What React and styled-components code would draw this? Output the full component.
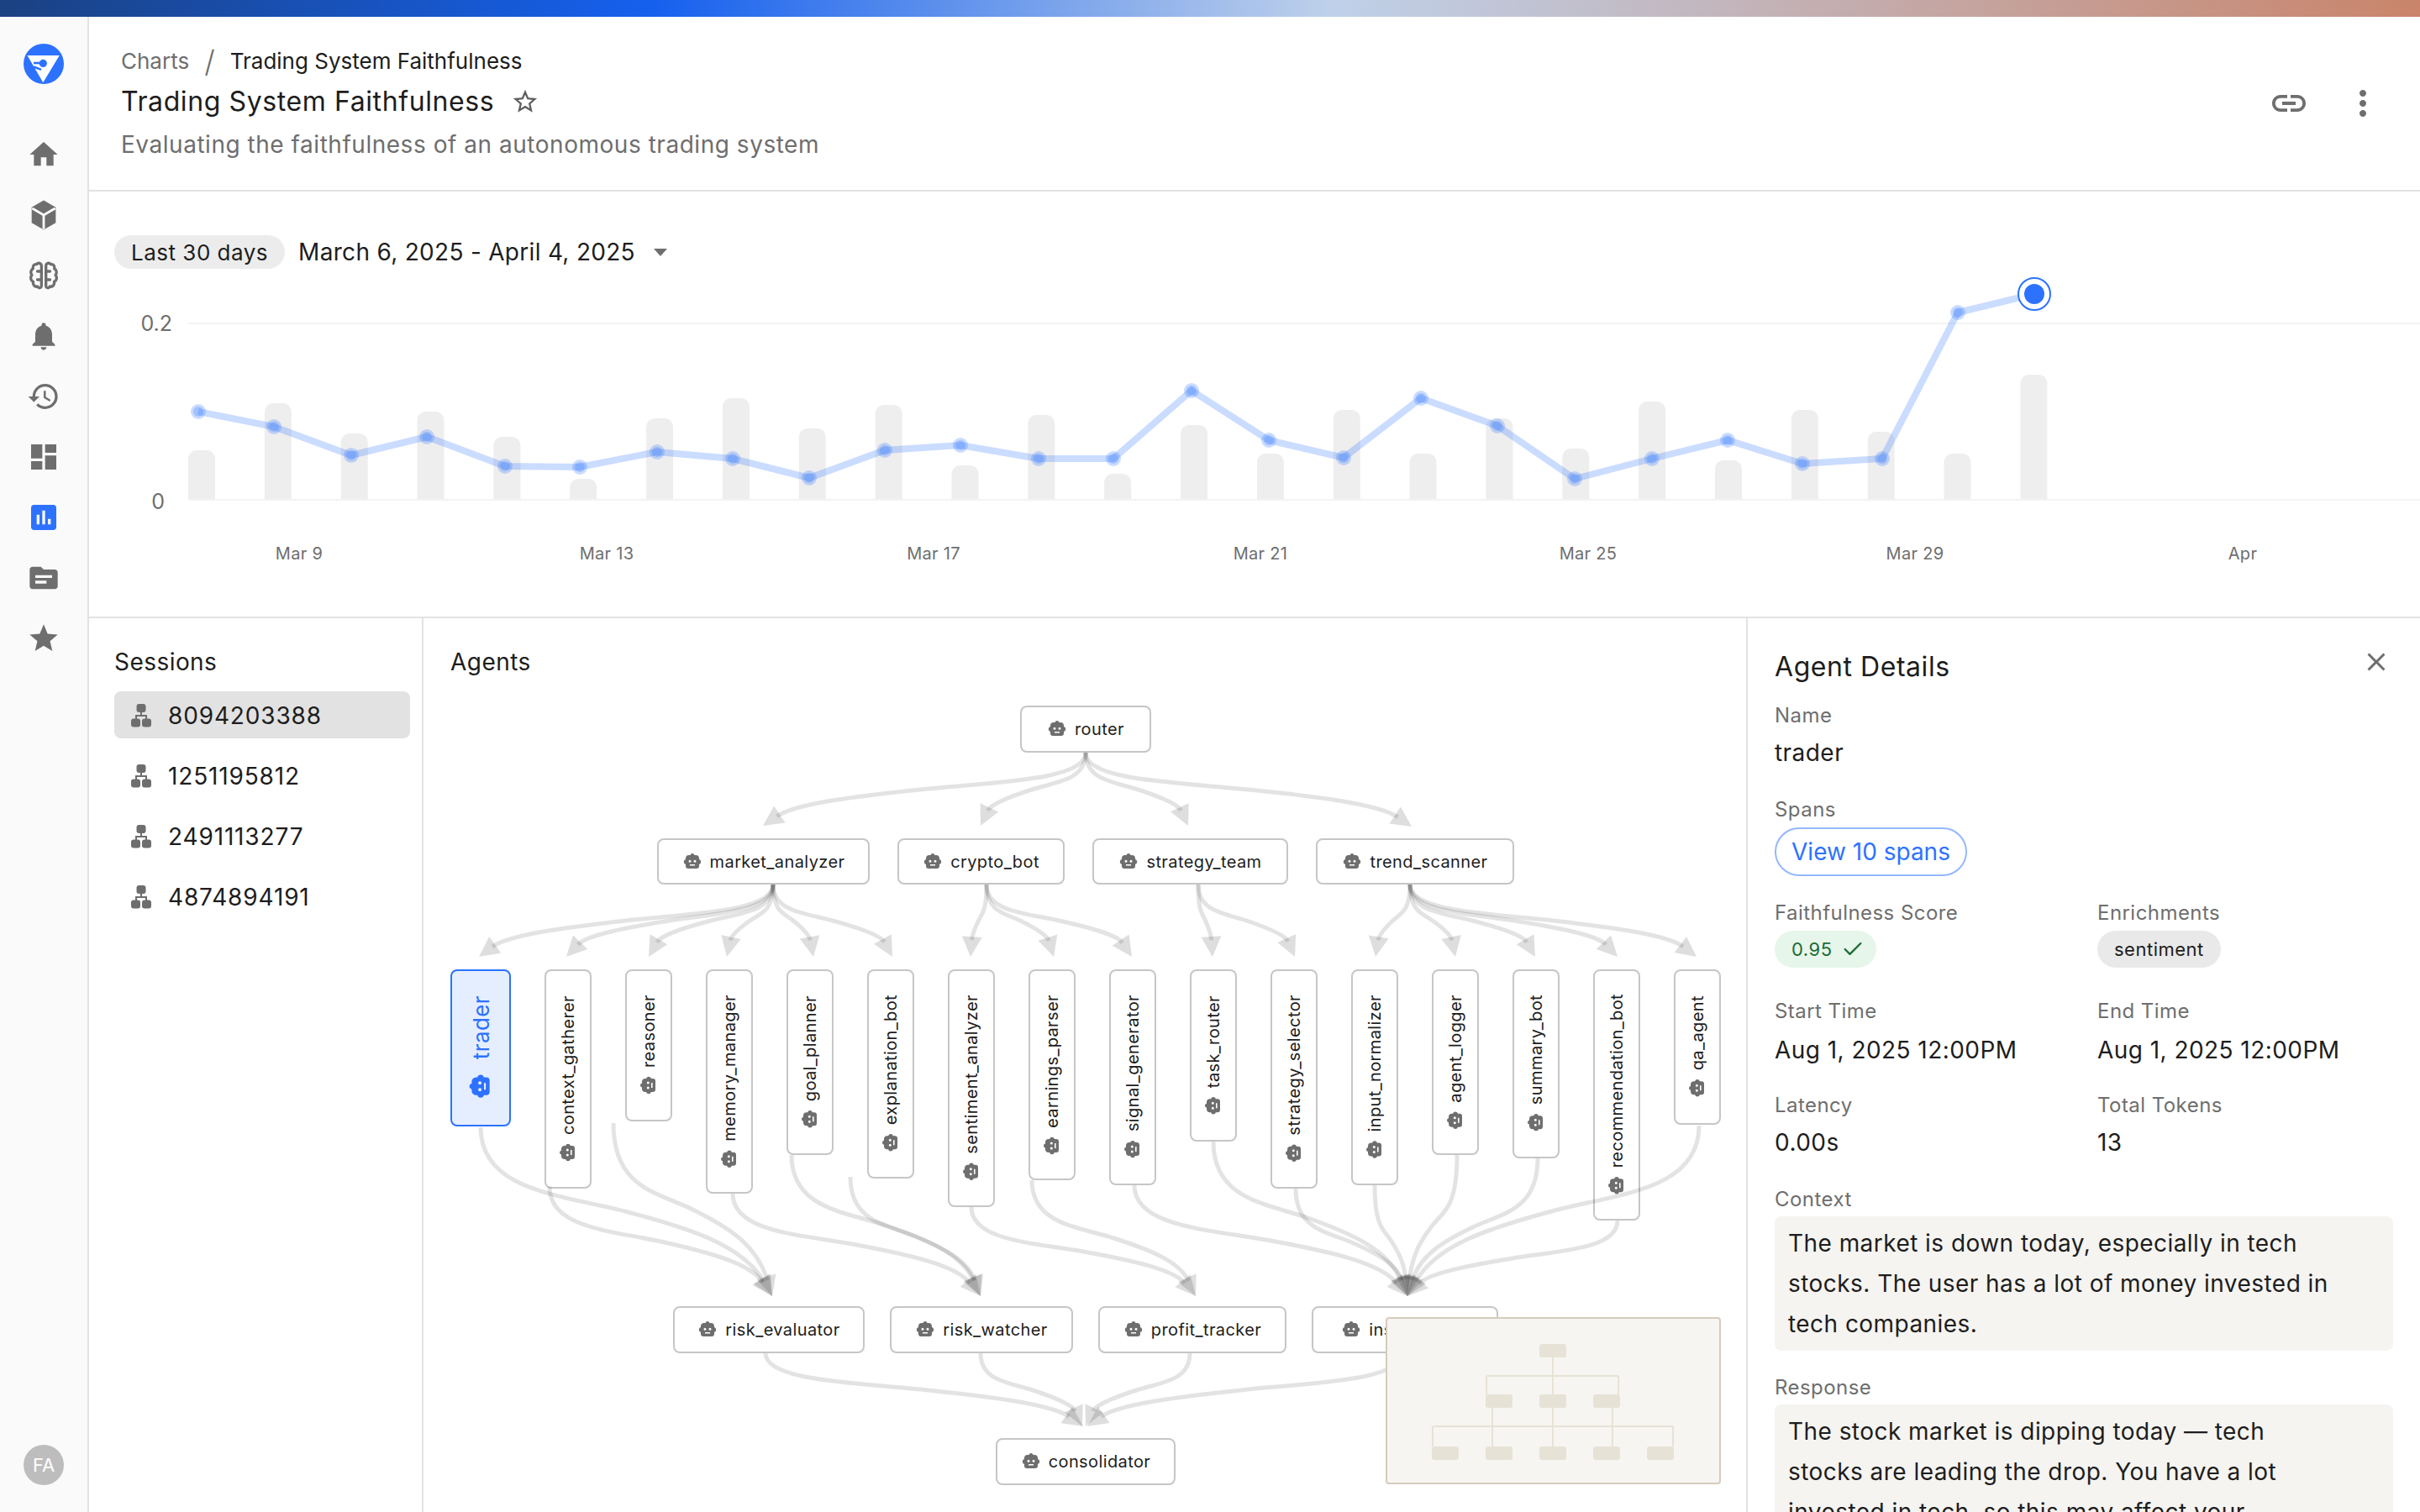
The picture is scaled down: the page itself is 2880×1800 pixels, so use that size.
import React from 'react';
import styled, { createGlobalStyle } from 'styled-components';
import { MdHome, MdNotifications, MdHistory, MdDashboard, MdStar, MdInsertChart, MdTopic, MdLink, MdMoreVert, MdClose, MdStarBorder } from 'react-icons/md';
import { LuCheck } from 'react-icons/lu';

const GlobalStyle = createGlobalStyle`
  html, body {
    margin: 0;
    padding: 0;
    background: #fff;
    font-family: 'Inter', 'Liberation Sans', sans-serif;
    color: #1d1d1d;
  }
  * { box-sizing: border-box; }
`;

const Page = styled.div`
  width: 2880px;
  height: 1800px;
  display: flex;
  flex-direction: column;
  overflow: hidden;
  background: #fff;
`;

const TopStripe = styled.div`
  height: 20px;
  flex: none;
  background: linear-gradient(90deg, #1b4282 0%, #1560ee 27%, #bfd1ea 55%, #c9846a 100%);
`;

const Shell = styled.div`
  flex: 1;
  display: flex;
  min-height: 0;
`;

// left icon rail
const Sidebar = styled.nav`
  width: 106px;
  flex: none;
  display: flex;
  flex-direction: column;
  align-items: center;
  padding: 32px 0;
  background: #fafafa;
  border-right: 2px solid #e2e2e2;
`;

const NavList = styled.div`
  display: flex;
  flex-direction: column;
  align-items: center;
  gap: 32px;
  margin-top: 64px;
  flex: 1;
`;

const NavItem = styled.div`
  width: 40px;
  height: 40px;
  display: flex;
  align-items: center;
  justify-content: center;
  color: ${p => (p.$active ? '#2d72ff' : '#6e6e6e')};
`;

const Avatar = styled.div`
  width: 48px;
  height: 48px;
  border-radius: 50%;
  background: #bdbdbd;
  color: #fff;
  font-size: 22px;
  display: flex;
  align-items: center;
  justify-content: center;
`;

const Main = styled.main`
  flex: 1;
  min-width: 0;
  display: flex;
  flex-direction: column;
`;

const Header = styled.header`
  height: 208px;
  flex: none;
  display: flex;
  justify-content: space-between;
  align-items: center;
  padding: 0 44px 0 38px;
  border-bottom: 2px solid #e2e2e2;
`;

const HeaderText = styled.div`
  display: flex;
  flex-direction: column;
  margin-bottom: 1px;
`;

const Breadcrumb = styled.div`
  display: flex;
  align-items: center;
  gap: 18px;
  font-size: 26px;
  line-height: 40px;
  color: #1d1d1d;
`;

const Crumb = styled.span`
  color: #6e6e6e;
`;

const Slash = styled.span`
  font-size: 36px;
  font-weight: 300;
  color: #6e6e6e;
`;

const TitleRow = styled.div`
  display: flex;
  align-items: center;
  gap: 20px;
  margin-top: 4px;
  color: #5e5e5e;
`;

const Title = styled.h1`
  margin: 0;
  font-size: 32px;
  line-height: 48px;
  font-weight: 400;
  letter-spacing: 0.6px;
  color: #1d1d1d;
`;

const Subtitle = styled.p`
  margin: 7px 0 0;
  font-size: 28px;
  line-height: 40px;
  letter-spacing: 0.53px;
  color: #6e6e6e;
`;

const HeaderActions = styled.div`
  display: flex;
  align-items: center;
  gap: 40px;
  color: #6e6e6e;
`;

// chart block
const ChartSection = styled.section`
  height: 508px;
  flex: none;
  padding-top: 52px;
  border-bottom: 2px solid #e2e2e2;
`;

const DateRow = styled.div`
  display: flex;
  align-items: center;
  height: 40px;
  padding-left: 30px;
`;

const RangePill = styled.span`
  height: 40px;
  padding: 0 20px;
  display: inline-flex;
  align-items: center;
  border-radius: 20px;
  background: #ececec;
  font-size: 26px;
  letter-spacing: 0.5px;
`;

const DateText = styled.span`
  margin-left: 16px;
  font-size: 28px;
  letter-spacing: 0.3px;
`;

const Caret = styled.span`
  margin-left: 22px;
  width: 0;
  height: 0;
  border-left: 8px solid transparent;
  border-right: 8px solid transparent;
  border-top: 9px solid #6e6e6e;
`;

const ChartSvg = styled.svg`
  display: block;
  margin-top: 10px;
  font-family: 'Inter', 'Liberation Sans', sans-serif;
`;

const Bottom = styled.div`
  flex: 1;
  min-height: 0;
  display: flex;
`;

const SessionsPanel = styled.aside`
  width: 398px;
  flex: none;
  padding: 34px 30px 0;
  border-right: 2px solid #e2e2e2;
`;

const PanelTitle = styled.h2`
  margin: 0;
  font-size: 28px;
  line-height: 36px;
  font-weight: 400;
  letter-spacing: 0.45px;
`;

const SessionList = styled.div`
  display: flex;
  flex-direction: column;
  gap: 16px;
  width: 352px;
  margin-top: 17px;
`;

const SessionRow = styled.div`
  height: 56px;
  display: flex;
  align-items: center;
  gap: 20px;
  padding-left: 20px;
  padding-top: 1px;
  border-radius: 8px;
  font-size: 28px;
  letter-spacing: 0.85px;
  background: ${p => (p.$active ? '#e2e2e2' : 'transparent')};
  color: #1d1d1d;
`;

const AgentsPanel = styled.section`
  flex: 1;
  min-width: 0;
  display: flex;
  flex-direction: column;
  padding-top: 34px;
`;

const AgentsTitle = styled(PanelTitle)`
  padding-left: 32px;
`;

const GraphCanvas = styled.div`
  position: relative;
  flex: 1;
`;

const EdgeLayer = styled.svg`
  position: absolute;
  left: 0;
  top: 0;
  z-index: 1;
  pointer-events: none;
`;

const GraphNode = styled.div`
  position: absolute;
  left: ${p => p.$x - ORIGIN_X}px;
  top: ${p => p.$y - ORIGIN_Y}px;
  width: ${p => p.$w}px;
  height: ${p => p.$h}px;
  display: flex;
  align-items: center;
  justify-content: center;
  border: 2px solid ${p => (p.$selected ? '#2d72ff' : '#c6c6c6')};
  border-radius: 8px;
  background: ${p => (p.$selected ? '#e5eeff' : '#fff')};
  color: ${p => (p.$selected ? '#2d72ff' : '#1d1d1d')};
`;

const NodeInner = styled.div`
  display: flex;
  align-items: center;
  gap: ${p => (p.$selected ? 16 : 9)}px;
  white-space: nowrap;
  font-size: ${p => (p.$selected ? 26 : 20)}px;
  letter-spacing: 0.4px;
  ${p => p.$vertical && 'writing-mode: vertical-rl; transform: rotate(180deg);'}
`;

const NodeIcon = styled.svg`
  flex: none;
  color: ${p => (p.$selected ? '#2d72ff' : '#6e6e6e')};
  ${p => p.$vertical && 'transform: rotate(90deg);'}
`;

const MiniMap = styled.div`
  position: absolute;
  left: ${1649 - 504}px;
  top: ${1568 - 806}px;
  width: 399px;
  height: 199px;
  z-index: 2;
  background: #f6f5f1;
  border: 2px solid #d6cbbd;
  border-radius: 4px;
  overflow: hidden;
`;

// right details panel
const DetailsPanel = styled.aside`
  width: 802px;
  flex: none;
  padding: 38px 32px 0;
  border-left: 2px solid #e2e2e2;
  overflow: hidden;
`;

const DetailsHeader = styled.div`
  display: flex;
  justify-content: space-between;
  align-items: flex-start;
  color: #6e6e6e;
`;

const DetailsTitle = styled.h2`
  margin: 0;
  font-size: 32px;
  line-height: 40px;
  font-weight: 400;
  letter-spacing: 0.55px;
  color: #1d1d1d;
`;

const CloseSlot = styled.div`
  margin-top: -4px;
  margin-right: 2px;
  height: 36px;
`;

const Field = styled.div`
  margin-top: ${p => p.$mt || 0}px;
`;

const FieldGrid = styled.div`
  display: grid;
  grid-template-columns: 384px 1fr;
  margin-top: ${p => p.$mt || 0}px;
`;

const Label = styled.div`
  font-size: 24px;
  line-height: 32px;
  letter-spacing: 0.45px;
  color: #6e6e6e;
`;

const Value = styled.div`
  margin-top: ${p => p.$mt ?? 8}px;
  font-size: 28px;
  line-height: 40px;
  letter-spacing: 0.45px;
  color: #1d1d1d;
`;

const SpansButton = styled.div`
  margin-top: 5px;
  width: 229px;
  height: 58px;
  display: flex;
  align-items: center;
  justify-content: center;
  border: 2px solid #94b8ff;
  border-radius: 29px;
  font-size: 28px;
  color: #2d72ff;
`;

const Chip = styled.div`
  margin-top: 5px;
  display: inline-flex;
  align-items: center;
  gap: 10px;
  height: 44px;
  padding: 0 ${p => (p.$good ? 14 : 20)}px 0 20px;
  border-radius: 22px;
  font-size: 22px;
  letter-spacing: 0.5px;
  background: ${p => (p.$good ? '#e6f6ea' : '#e9e9e9')};
  color: ${p => (p.$good ? '#1c6b36' : '#1d1d1d')};
`;

const TextBlock = styled.div`
  margin-top: 4px;
  padding: 8px 72px 8px 16px;
  border-radius: 8px;
  background: #f5f4f1;
  font-size: 28px;
  line-height: 48px;
  letter-spacing: 0.45px;
  color: #1d1d1d;
`;

const ORIGIN_X = 504;
const ORIGIN_Y = 806;

const BAR_HEIGHTS = [58, 114, 78, 104, 74, 24, 96, 120, 84, 112, 40, 100, 30, 88, 54, 106, 54, 96, 60, 116, 46, 106, 80, 54, 148];
const LINE_POINTS = [
  [236, 490], [326, 508], [418, 542], [508, 520], [601, 555], [690, 556], [782, 538], [872, 546], [963, 569], [1053, 536],
  [1143, 530], [1236, 546], [1325, 546], [1418, 465], [1510, 524], [1599, 545], [1691, 474], [1782, 507], [1874, 570],
  [1966, 546], [2056, 524], [2145, 552], [2240, 546], [2330, 372],
];
const LAST_POINT = [2421, 350];
const X_LABELS = [['Mar 9', 356], ['Mar 13', 722], ['Mar 17', 1111], ['Mar 21', 1500], ['Mar 25', 1890], ['Mar 29', 2279], ['Apr', 2669]];

const Logo = () => (
  <svg width="48" height="48" viewBox="0 0 48 48">
    <circle cx="24" cy="24" r="24" fill="#2d72ff" />
    <path d="M4.5 14h38.2L23.3 46.3z" fill="#fff" />
    <path d="M12 23h11" stroke="#2d72ff" strokeWidth="2.6" fill="none" />
    <circle cx="23.3" cy="23.4" r="4.6" fill="#2d72ff" />
    <path d="M12 27.5l9 3.4" stroke="#2d72ff" strokeWidth="2.6" fill="none" />
  </svg>
);

const CubeIcon = ({ size }) => (
  <svg width={size} height={size} viewBox="0 0 24 24">
    <path d="M12 1.5l8.6 5v11L12 22.5l-8.6-5v-11z" fill="currentColor" />
    <path d="M3.8 7.2L12 12l8.2-4.8M12 12v10" stroke="#fafafa" strokeWidth="1.7" fill="none" />
  </svg>
);

const BrainIcon = ({ size }) => (
  <svg width={size} height={size} viewBox="0 0 24 24" fill="none" stroke="currentColor" strokeWidth="2" strokeLinejoin="round" strokeLinecap="round">
    <path d="M10.4 4.8C10 3 8 2.6 6.9 4 5 3.7 3.9 5.4 4.4 7.1 2.6 8 2.4 10.4 3.6 11.6 2.2 13 2.6 15.6 4.5 16.4 4 18.4 5.6 20.4 7.6 19.8 8.5 21.4 10.2 21 10.4 19.4z" />
    <path d="M13.6 4.8C14 3 16 2.6 17.1 4 19 3.7 20.1 5.4 19.6 7.1 21.4 8 21.6 10.4 20.4 11.6 21.8 13 21.4 15.6 19.5 16.4 20 18.4 18.4 20.4 16.4 19.8 15.5 21.4 13.8 21 13.6 19.4z" />
    <path d="M10.4 9H7.5M10.4 15H7.5M13.6 9h2.9M13.6 15h2.9" />
  </svg>
);

const SessionIcon = () => (
  <svg width="24" height="28" viewBox="0 0 24 28" fill="#6e6e6e">
    <rect x="6.5" y="0" width="11" height="10" rx="3" />
    <rect x="0" y="17.5" width="11" height="10" rx="3" />
    <rect x="13" y="17.5" width="11" height="10" rx="3" />
    <path d="M11 9h2v4h6v5h-2v-3H7v3H5v-5h6z" />
  </svg>
);

const ROBOT_PATH =
  'M12 2a2.5 2.5 0 0 1 2.45 2H16a4 4 0 0 1 4 4v1.1a3 3 0 0 1 0 5.8V17a3 3 0 0 1-3 3H7a3 3 0 0 1-3-3v-2.1a3 3 0 0 1 0-5.8V8a4 4 0 0 1 4-4h1.55A2.5 2.5 0 0 1 12 2z' +
  'M9 9.8a1.5 1.5 0 1 0 0 3 1.5 1.5 0 0 0 0-3zM15 9.8a1.5 1.5 0 1 0 0 3 1.5 1.5 0 0 0 0-3zM9 15h6v1.6H9z';

const AGENTS = {
  router: { x: 1214, y: 840, w: 156, h: 56 },
  market_analyzer: { x: 782, y: 998, w: 253, h: 55 },
  crypto_bot: { x: 1068, y: 998, w: 199, h: 55 },
  strategy_team: { x: 1300, y: 998, w: 233, h: 55 },
  trend_scanner: { x: 1566, y: 998, w: 236, h: 55 },
  trader: { x: 536, y: 1154, w: 72, h: 187, vertical: true, selected: true },
  context_gatherer: { x: 648, y: 1154, w: 56, h: 261, vertical: true },
  reasoner: { x: 744, y: 1154, w: 56, h: 181, vertical: true },
  memory_manager: { x: 840, y: 1154, w: 56, h: 267, vertical: true },
  goal_planner: { x: 936, y: 1154, w: 56, h: 221, vertical: true },
  explanation_bot: { x: 1032, y: 1154, w: 56, h: 249, vertical: true },
  sentiment_analyzer: { x: 1128, y: 1154, w: 56, h: 283, vertical: true },
  earnings_parser: { x: 1224, y: 1154, w: 56, h: 251, vertical: true },
  signal_generator: { x: 1320, y: 1154, w: 56, h: 257, vertical: true },
  task_router: { x: 1416, y: 1154, w: 56, h: 205, vertical: true },
  strategy_selector: { x: 1512, y: 1154, w: 56, h: 261, vertical: true },
  input_normalizer: { x: 1608, y: 1154, w: 56, h: 257, vertical: true },
  agent_logger: { x: 1704, y: 1154, w: 56, h: 221, vertical: true },
  summary_bot: { x: 1800, y: 1154, w: 56, h: 225, vertical: true },
  recommendation_bot: { x: 1896, y: 1154, w: 56, h: 299, vertical: true },
  qa_agent: { x: 1992, y: 1154, w: 56, h: 185, vertical: true },
  risk_evaluator: { x: 801, y: 1555, w: 228, h: 56 },
  risk_watcher: { x: 1059, y: 1555, w: 218, h: 56 },
  profit_tracker: { x: 1307, y: 1555, w: 224, h: 56 },
  insights_bot: { x: 1561, y: 1555, w: 222, h: 56 },
  consolidator: { x: 1185, y: 1712, w: 214, h: 56 },
};

// [from x, from y, arrow tip x, arrow tip y]
const EDGES = [
  [1292, 896, 908, 983], [1292, 896, 1167, 983], [1292, 896, 1414, 983], [1292, 896, 1680, 984],
  [920, 1053, 570, 1139], [920, 1053, 674, 1139], [920, 1053, 772, 1139], [920, 1053, 865, 1139], [920, 1053, 968, 1139], [920, 1053, 1062, 1139],
  [1174, 1053, 1155, 1139], [1174, 1053, 1254, 1139], [1174, 1053, 1347, 1139],
  [1426, 1053, 1443, 1139], [1426, 1053, 1541, 1139],
  [1678, 1053, 1637, 1139], [1678, 1053, 1732, 1139], [1678, 1053, 1827, 1139], [1678, 1053, 1925, 1139], [1678, 1053, 2019, 1139],
  [572, 1342, 919, 1543], [654, 1413, 919, 1543], [730, 1337, 919, 1543],
  [872, 1421, 1167, 1543], [942, 1375, 1167, 1543], [1012, 1401, 1167, 1543],
  [1156, 1437, 1423, 1543], [1228, 1405, 1423, 1543],
  [1350, 1411, 1675, 1543], [1444, 1359, 1675, 1543], [1542, 1415, 1675, 1543], [1636, 1411, 1675, 1543],
  [1734, 1375, 1675, 1543], [1830, 1379, 1675, 1543], [1925, 1453, 1675, 1543], [2022, 1340, 1675, 1543],
  [911, 1611, 1289, 1698], [1167, 1611, 1288, 1698], [1416, 1611, 1292, 1698], [1668, 1611, 1294, 1698],
];

const edgeShape = ([sx, sy, tx, ty]) => {
  const dx = tx - sx;
  const h = ty - sy;
  const c4x = tx - dx * 0.1;
  const c4y = ty - h * 0.3;
  const len = Math.hypot(tx - c4x, ty - c4y);
  const ux = (tx - c4x) / len;
  const uy = (ty - c4y) / len;
  const ex = tx - ux * 20;
  const ey = ty - uy * 20;
  const path =
    `M${sx} ${sy}C${sx} ${sy + h * 0.38} ${sx + dx * 0.28} ${sy + h * 0.4} ${sx + dx * 0.5} ${sy + h * 0.5}` +
    `C${sx + dx * 0.72} ${sy + h * 0.6} ${c4x} ${c4y} ${ex} ${ey}`;
  const bx = tx - ux * 24;
  const by = ty - uy * 24;
  const arrow = `${tx},${ty} ${bx - uy * 12},${by + ux * 12} ${bx + uy * 12},${by - ux * 12}`;
  return { path, arrow };
};

const barPath = (x, h) => {
  const top = 594 - h;
  return `M${x} 594V${top + 10}a10 10 0 0 1 10-10h12a10 10 0 0 1 10 10V594z`;
};

const Chart = () => (
  <ChartSvg width="2774" height="394" viewBox="106 330 2774 394">
    <line x1="224" x2="2880" y1="385" y2="385" stroke="#f3f3f3" strokeWidth="2" />
    <line x1="224" x2="2880" y1="595" y2="595" stroke="#f3f3f3" strokeWidth="2" />
    <text x="205" y="394" textAnchor="end" fontSize="25" fill="#6e6e6e">0.2</text>
    <text x="196" y="606" textAnchor="end" fontSize="25" fill="#6e6e6e">0</text>
    {BAR_HEIGHTS.map((h, i) => (
      <path key={i} d={barPath(224 + i * 90.85, h)} fill="#eeeeee" />
    ))}
    <polyline
      points={[...LINE_POINTS, LAST_POINT].map(p => p.join(',')).join(' ')}
      fill="none"
      stroke="#2d72ff"
      strokeOpacity="0.25"
      strokeWidth="8"
    />
    {LINE_POINTS.map(([x, y]) => (
      <g key={x}>
        <circle cx={x} cy={y} r="9" fill="#2d72ff" fillOpacity="0.25" />
        <circle cx={x} cy={y} r="6" fill="#2d72ff" fillOpacity="0.25" />
      </g>
    ))}
    <circle cx={LAST_POINT[0]} cy={LAST_POINT[1]} r="19" fill="#fff" stroke="#2d72ff" strokeWidth="2" />
    <circle cx={LAST_POINT[0]} cy={LAST_POINT[1]} r="12" fill="#2d72ff" />
    {X_LABELS.map(([label, x]) => (
      <text key={label} x={x} y="666" textAnchor="middle" fontSize="20" letterSpacing="0.3" fill="#6e6e6e">{label}</text>
    ))}
  </ChartSvg>
);

const AgentNode = ({ name, node }) => (
  <GraphNode $x={node.x} $y={node.y} $w={node.w} $h={node.h} $selected={node.selected}>
    <NodeInner $vertical={node.vertical} $selected={node.selected}>
      <NodeIcon
        $vertical={node.vertical}
        $selected={node.selected}
        width={node.selected ? 32 : 24}
        height={node.selected ? 32 : 24}
        viewBox="0 0 24 24"
      >
        <path d={ROBOT_PATH} fill="currentColor" fillRule="evenodd" />
      </NodeIcon>
      <span>{name}</span>
    </NodeInner>
  </GraphNode>
);

const MINI_RECTS = [
  [1832, 1600], [1768, 1660], [1832, 1660], [1896, 1660],
  [1704, 1722], [1768, 1722], [1832, 1722], [1896, 1722], [1960, 1722],
];

const MiniMapDrawing = () => (
  <svg width="395" height="195" viewBox="1651 1570 395 195">
    <g stroke="#e7e2d6" strokeWidth="2" fill="none">
      <path d="M1848 1616V1660M1769 1638H1926M1769 1638V1660M1926 1638V1660" />
      <path d="M1776 1676V1722M1848 1676V1722M1919 1676V1722M1705 1698H1991M1705 1698V1722M1991 1698V1722" />
    </g>
    {MINI_RECTS.map(([x, y]) => (
      <rect key={`${x}-${y}`} x={x} y={y} width="32" height="16" rx="3" fill="#e7e2d6" />
    ))}
  </svg>
);

const Graph = () => (
  <GraphCanvas>
    {Object.entries(AGENTS).map(([name, node]) => (
      <AgentNode key={name} name={name} node={node} />
    ))}
    <EdgeLayer width="1574" height="994" viewBox={`${ORIGIN_X} ${ORIGIN_Y} 1574 994`}>
      {EDGES.map((edge, i) => {
        const { path, arrow } = edgeShape(edge);
        return (
          <g key={i}>
            <path d={path} fill="none" stroke="#000" strokeOpacity="0.11" strokeWidth="5" />
            <polygon points={arrow} fill="#000" fillOpacity="0.13" />
          </g>
        );
      })}
    </EdgeLayer>
    <MiniMap>
      <MiniMapDrawing />
    </MiniMap>
  </GraphCanvas>
);

const NAV_ICONS = [MdHome, CubeIcon, BrainIcon, MdNotifications, MdHistory, MdDashboard, MdInsertChart, MdTopic, MdStar];

export default function App() {
  return (
    <Page>
      <GlobalStyle />
      <TopStripe />
      <Shell>
        <Sidebar>
          <Logo />
          <NavList>
            {NAV_ICONS.map((Icon, i) => (
              <NavItem key={i} $active={i === 6}>
                <Icon size={40} />
              </NavItem>
            ))}
          </NavList>
          <Avatar>FA</Avatar>
        </Sidebar>
        <Main>
          <Header>
            <HeaderText>
              <Breadcrumb>
                <Crumb>Charts</Crumb>
                <Slash>/</Slash>
                <span>Trading System Faithfulness</span>
              </Breadcrumb>
              <TitleRow>
                <Title>Trading System Faithfulness</Title>
                <MdStarBorder size={34} />
              </TitleRow>
              <Subtitle>Evaluating the faithfulness of an autonomous trading system</Subtitle>
            </HeaderText>
            <HeaderActions>
              <MdLink size={48} />
              <MdMoreVert size={48} />
            </HeaderActions>
          </Header>
          <ChartSection>
            <DateRow>
              <RangePill>Last 30 days</RangePill>
              <DateText>March 6, 2025 - April 4, 2025</DateText>
              <Caret />
            </DateRow>
            <Chart />
          </ChartSection>
          <Bottom>
            <SessionsPanel>
              <PanelTitle>Sessions</PanelTitle>
              <SessionList>
                {['8094203388', '1251195812', '2491113277', '4874894191'].map((id, i) => (
                  <SessionRow key={id} $active={i === 0}>
                    <SessionIcon />
                    {id}
                  </SessionRow>
                ))}
              </SessionList>
            </SessionsPanel>
            <AgentsPanel>
              <AgentsTitle>Agents</AgentsTitle>
              <Graph />
            </AgentsPanel>
            <DetailsPanel>
              <DetailsHeader>
                <DetailsTitle>Agent Details</DetailsTitle>
                <CloseSlot>
                  <MdClose size={36} />
                </CloseSlot>
              </DetailsHeader>
              <Field $mt={22}>
                <Label>Name</Label>
                <Value>trader</Value>
              </Field>
              <Field $mt={32}>
                <Label>Spans</Label>
                <SpansButton>View 10 spans</SpansButton>
              </Field>
              <FieldGrid $mt={28}>
                <div>
                  <Label>Faithfulness Score</Label>
                  <Chip $good>
                    0.95
                    <LuCheck size={28} />
                  </Chip>
                </div>
                <div>
                  <Label>Enrichments</Label>
                  <Chip>sentiment</Chip>
                </div>
              </FieldGrid>
              <FieldGrid $mt={36}>
                <div>
                  <Label>Start Time</Label>
                  <Value $mt={10}>Aug 1, 2025 12:00PM</Value>
                </div>
                <div>
                  <Label>End Time</Label>
                  <Value $mt={10}>Aug 1, 2025 12:00PM</Value>
                </div>
              </FieldGrid>
              <FieldGrid $mt={30}>
                <div>
                  <Label>Latency</Label>
                  <Value>0.00s</Value>
                </div>
                <div>
                  <Label>Total Tokens</Label>
                  <Value>13</Value>
                </div>
              </FieldGrid>
              <Field $mt={32}>
                <Label>Context</Label>
                <TextBlock>
                  The market is down today, especially in tech stocks. The user has a lot of money invested in tech companies.
                </TextBlock>
              </Field>
              <Field $mt={28}>
                <Label>Response</Label>
                <TextBlock>
                  The stock market is dipping today — tech stocks are leading the drop. You have a lot invested in tech, so this may affect your portfolio.
                </TextBlock>
              </Field>
            </DetailsPanel>
          </Bottom>
        </Main>
      </Shell>
    </Page>
  );
}
